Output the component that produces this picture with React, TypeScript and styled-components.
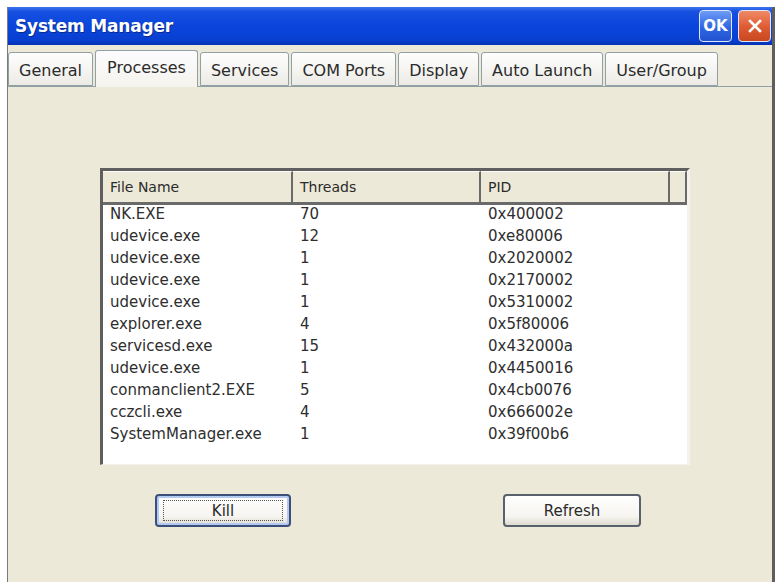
import React from "react";
import styled, { createGlobalStyle, css } from "styled-components";

const GlobalStyle = createGlobalStyle`
  html, body {
    margin: 0;
    padding: 0;
    background: #ffffff;
    font-family: "DejaVu Sans", "Liberation Sans", sans-serif;
  }
`;

// Page around the window.
const Screen = styled.div`
  width: 779px;
  height: 584px;
  padding: 7px 4px 0 7px;
  box-sizing: border-box;
  overflow: hidden;
`;

// The dialog window.
const Window = styled.div`
  width: 768px;
  height: 575px;
  display: flex;
  flex-direction: column;
  background: #ece9d8;
  border-left: 1px solid #7a7a7a;
  border-right: 3px solid #5e5e5e;
  box-sizing: border-box;
`;

// Blue caption bar.
const TitleBar = styled.div`
  height: 38px;
  display: flex;
  align-items: center;
  justify-content: space-between;
  padding: 0 1px 0 7px;
  background: linear-gradient(
    to bottom,
    #3b74ee 0%,
    #1650e0 12%,
    #0a45dc 50%,
    #083fd0 88%,
    #0532b0 100%
  );
`;

const Title = styled.span`
  color: #ffffff;
  font-weight: bold;
  font-size: 17px;
  letter-spacing: -0.2px;
  text-shadow: 1px 1px 0 #0b2a8a;
`;

const CaptionButtons = styled.div`
  display: flex;
  gap: 6px;
`;

const CaptionButton = styled.div<{ $tone: "ok" | "close" }>`
  width: 33px;
  height: 32px;
  box-sizing: border-box;
  border: 1px solid #dfe8fb;
  border-radius: 4px;
  display: flex;
  align-items: center;
  justify-content: center;
  color: #ffffff;
  font-weight: bold;
  font-size: 15px;
  ${({ $tone }) =>
    $tone === "ok"
      ? css`
          background: linear-gradient(to bottom, #6d9cf4, #2f66e4 55%, #2253d0);
        `
      : css`
          background: linear-gradient(to bottom, #f08a66, #dd5a32 55%, #c8481f);
        `}
`;

// Tab strip.
const TabStrip = styled.div`
  height: 41px;
  display: flex;
  align-items: flex-end;
  gap: 2px;
  position: relative;
  z-index: 1;
`;

const Tab = styled.div<{ $active?: boolean }>`
  height: ${({ $active }) => ($active ? 37 : 34)}px;
  margin-bottom: ${({ $active }) => ($active ? -1 : 0)}px;
  box-sizing: border-box;
  padding: ${({ $active }) => ($active ? "0 11px 4px" : "2px 10px 0")};
  display: flex;
  align-items: center;
  font-size: 16px;
  color: #2b2b2b;
  border: 1px solid #91a0a4;
  border-bottom: ${({ $active }) => ($active ? "none" : "1px solid #91a0a4")};
  border-radius: 3px 3px 0 0;
  background: ${({ $active }) =>
    $active
      ? "linear-gradient(to bottom, #fcfcfe, #f4f3ee)"
      : "linear-gradient(to bottom, #fefefe, #ecebe6)"};
`;

// Tab page.
const Panel = styled.div`
  flex: 1;
  border-top: 1px solid #91a0a4;
  background: #ece9d8;
  padding: 81px 0 0 92px;
  display: flex;
  flex-direction: column;
`;

// Sunken list view.
const ListView = styled.div`
  width: 590px;
  height: 297px;
  box-sizing: border-box;
  background: #ffffff;
  border-top: 3px solid #5f5f5f;
  border-left: 3px solid #5f5f5f;
  border-right: 3px solid #f3f2ec;
  border-bottom: 1px solid #f3f2ec;
`;

const Header = styled.div`
  display: flex;
  height: 31px;
  background: #ece9d8;
  border-bottom: 3px solid #6a6a6a;
  width: 584px;
`;

const HeaderCell = styled.div<{ $w: number }>`
  width: ${({ $w }) => $w}px;
  box-sizing: border-box;
  padding-left: 7px;
  display: flex;
  align-items: center;
  font-size: 14px;
  color: #2b2b2b;
  border-right: 2px solid #6a6a6a;
  border-top: 1px solid #fbfbf7;
`;

const Body = styled.div`
  margin-top: -2px;
`;

const Row = styled.div`
  display: flex;
  height: 22px;
  align-items: center;
`;

const Cell = styled.div<{ $w: number }>`
  width: ${({ $w }) => $w}px;
  box-sizing: border-box;
  padding-left: 7px;
  font-size: 15px;
  color: #2e2e2e;
  white-space: nowrap;
`;

// Kill / Refresh.
const ButtonRow = styled.div`
  width: 590px;
  display: flex;
  justify-content: space-between;
  padding: 0 49px 0 55px;
  margin-top: 29px;
  box-sizing: border-box;
`;

const PushButton = styled.div<{ $focused?: boolean }>`
  width: ${({ $focused }) => ($focused ? 136 : 138)}px;
  height: 33px;
  box-sizing: border-box;
  border: 2px solid ${({ $focused }) => ($focused ? "#3a5078" : "#58616c")};
  border-radius: 4px;
  background: linear-gradient(to bottom, #ffffff, #f6f5f0 70%, #dedbd0);
  display: flex;
  align-items: center;
  justify-content: center;
  font-size: 15px;
  color: #2b2b2b;
  ${({ $focused }) =>
    $focused &&
    css`
      box-shadow: inset 0 0 0 2px #b4c8f4;
    `}
`;

const FocusRect = styled.div`
  width: 120px;
  height: 21px;
  box-sizing: border-box;
  border: 1px dotted #555555;
  display: flex;
  align-items: center;
  justify-content: center;
`;

const tabs = [
  "General",
  "Processes",
  "Services",
  "COM Ports",
  "Display",
  "Auto Launch",
  "User/Group",
];

const processes: [string, string, string][] = [
  ["NK.EXE", "70", "0x400002"],
  ["udevice.exe", "12", "0xe80006"],
  ["udevice.exe", "1", "0x2020002"],
  ["udevice.exe", "1", "0x2170002"],
  ["udevice.exe", "1", "0x5310002"],
  ["explorer.exe", "4", "0x5f80006"],
  ["servicesd.exe", "15", "0x432000a"],
  ["udevice.exe", "1", "0x4450016"],
  ["conmanclient2.EXE", "5", "0x4cb0076"],
  ["cczcli.exe", "4", "0x666002e"],
  ["SystemManager.exe", "1", "0x39f00b6"],
];

const cols = [190, 188, 189];

const App = () => {
  return (
    <Screen>
      <GlobalStyle />
      <Window>
        <TitleBar>
          <Title>System Manager</Title>
          <CaptionButtons>
            <CaptionButton $tone="ok">OK</CaptionButton>
            <CaptionButton $tone="close">
              <svg width="14" height="14" viewBox="0 0 14 14">
                <path
                  d="M2 2 L12 12 M12 2 L2 12"
                  stroke="#ffffff"
                  strokeWidth="2.6"
                  strokeLinecap="square"
                />
              </svg>
            </CaptionButton>
          </CaptionButtons>
        </TitleBar>

        <TabStrip>
          {tabs.map((t) => (
            <Tab key={t} $active={t === "Processes"}>
              {t}
            </Tab>
          ))}
        </TabStrip>

        <Panel>
          <ListView>
            <Header>
              <HeaderCell $w={cols[0]}>File Name</HeaderCell>
              <HeaderCell $w={cols[1]}>Threads</HeaderCell>
              <HeaderCell $w={cols[2]}>PID</HeaderCell>
              <HeaderCell $w={17} />
            </Header>
            <Body>
              {processes.map(([name, threads, pid], i) => (
                <Row key={i}>
                  <Cell $w={cols[0]}>{name}</Cell>
                  <Cell $w={cols[1]}>{threads}</Cell>
                  <Cell $w={cols[2]}>{pid}</Cell>
                </Row>
              ))}
            </Body>
          </ListView>

          <ButtonRow>
            <PushButton $focused>
              <FocusRect>Kill</FocusRect>
            </PushButton>
            <PushButton>Refresh</PushButton>
          </ButtonRow>
        </Panel>
      </Window>
    </Screen>
  );
};

export default App;
